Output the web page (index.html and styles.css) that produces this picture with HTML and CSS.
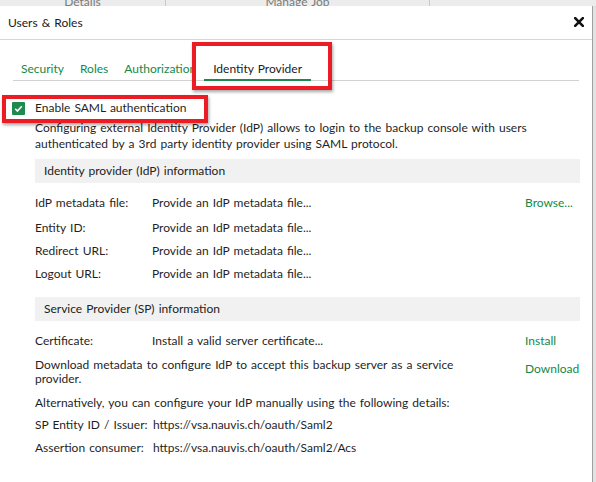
FILE: index.html
```html
<!DOCTYPE html>
<html lang="en">
<head>
<meta charset="utf-8">
<title>Users &amp; Roles</title>
<link rel="stylesheet" href="styles.css">
</head>
<body>
<div class="screen">
  <div class="strip">
    <div class="col c1"><span>Details</span></div>
    <div class="col c2"><span>Manage Job</span></div>
    <div class="col c3"></div>
  </div>
  <div class="main">
    <div class="dialog">
      <header class="dhead">
        <span class="title">Users &amp; Roles</span>
        <svg class="close" width="10" height="10" viewBox="0 0 10 10"><path d="M1.2 1.2 L8.8 8.8 M8.8 1.2 L1.2 8.8" stroke="#111" stroke-width="2.6" stroke-linecap="square" fill="none"/></svg>
      </header>
      <nav class="tabs">
        <span class="tab">Security</span>
        <span class="tab">Roles</span>
        <span class="tab">Authorization</span>
        <span class="tab active">Identity Provider</span>
      </nav>
      <div class="content">
        <div class="check">
          <span class="box"><svg width="13" height="13" viewBox="0 0 13 13"><path d="M3.2 6.8 L5.4 9 L9.8 4.2" stroke="#fff" stroke-width="1.6" fill="none"/></svg></span>
          <span>Enable SAML authentication</span>
        </div>
        <p class="desc">Configuring external Identity Provider (IdP) allows to login to the backup console with users authenticated by a 3rd party identity provider using SAML protocol.</p>

        <div class="sec">Identity provider (IdP) information</div>
        <div class="rows">
          <div class="row tall"><span>IdP metadata file:</span><span>Provide an IdP metadata file...</span><span class="link">Browse...</span></div>
          <div class="row"><span>Entity ID:</span><span>Provide an IdP metadata file...</span><span></span></div>
          <div class="row"><span>Redirect URL:</span><span>Provide an IdP metadata file...</span><span></span></div>
          <div class="row"><span>Logout URL:</span><span>Provide an IdP metadata file...</span><span></span></div>
        </div>

        <div class="sec sec2">Service Provider (SP) information</div>
        <div class="row cert"><span>Certificate:</span><span>Install a valid server certificate...</span><span class="link">Install</span></div>
        <div class="dl">
          <span class="dltext">Download metadata to configure IdP to accept this backup server as a service provider.</span>
          <span class="link dllink">Download</span>
        </div>
        <div class="alt">Alternatively, you can configure your IdP manually using the following details:</div>
        <div class="sprow"><span>SP Entity ID / Issuer:</span><span>https://vsa.nauvis.ch/oauth/Saml2</span></div>
        <div class="sprow"><span>Assertion consumer:</span><span>https://vsa.nauvis.ch/oauth/Saml2/Acs</span></div>
      </div>
    </div>
    <div class="side"></div>
  </div>
  <div class="mark mark1"></div>
  <div class="mark mark2"></div>
</div>
</body>
</html>
```
FILE: styles.css
```css
* { box-sizing: border-box; }
body {
  margin: 0;
  background: #e4e4e4;
  font-family: Lato, "Segoe UI", sans-serif;
  font-size: 12px;
  word-spacing: 1px;
  color: #1f1f1f;
}
.screen { width: 596px; height: 482px; position: relative; overflow: hidden; }

.strip { display: flex; height: 6px; overflow: hidden; background: #ececec; color: #7a7a7a; }
.col { border-right: 1px solid #c9c9c9; text-align: center; line-height: 12px; }
.col span { display: block; margin-top: -4px; }
.c1 { width: 166px; }
.c2 { width: 264px; }
.c3 { flex: 1; border-right: 0; }

.main { display: flex; height: 476px; }
.dialog { width: 593px; background: #fff; border-right: 1px solid #a0a0a0; }
.side { flex: 1; background: #e2e2e2; }

.dhead {
  height: 34px;
  border-bottom: 1px solid #d6d6d6;
  display: flex;
  align-items: center;
  justify-content: space-between;
  padding: 0 8px 0 8px;
}
.title { font-size: 12px; color: #1a1a1a; }
.close { display: block; margin-top: -1px; }

.tabs {
  display: flex;
  margin: 17px 0 0 13px;
  width: 566px;
  height: 24px;
  border-bottom: 1px solid #d2d2d2;
}
.tab { padding: 0 8px; height: 23px; line-height: 23px; color: #138a47; }
.tab.active {
  color: #222;
  height: 24px;
  padding: 0 9px;
  box-shadow: inset 0 -2px 0 #1b8a4c;
}

.content { padding: 0 12px 0 35px; }

.check {
  display: flex;
  align-items: center;
  gap: 10px;
  margin: 19px 0 0 -23px;
  height: 16px;
  line-height: 16px;
}
.box { width: 13px; height: 13px; background: #1f8a4e; border-radius: 1px; display: block; }
.box svg { display: block; }

.desc { margin: 4px 0 0; line-height: 16px; max-width: 545px; }

.sec {
  margin-top: 7px;
  height: 24px;
  line-height: 24px;
  padding-left: 9px;
  background: #f1f1f1;
  color: #222;
}
.sec2 { margin-top: 12px; }

.rows { margin-top: 6px; }
.row {
  display: grid;
  grid-template-columns: 117px 1fr 55px;
  align-items: center;
  height: 23px;
}
.row.tall { height: 27px; }
.row.cert { margin-top: 8px; }
.link { color: #128a46; }

.dl {
  display: flex;
  justify-content: space-between;
  margin-top: 6px;
  line-height: 14px;
}
.dltext { max-width: 440px; }
.dllink { width: 55px; padding-top: 4px; }

.alt { margin-top: 6px; height: 21px; line-height: 21px; }
.sprow {
  display: grid;
  grid-template-columns: 118px 1fr;
  align-items: center;
  height: 23px;
}

.mark {
  position: absolute;
  border: 4px solid #ec1c24;
  box-shadow: 1px 2px 3px rgba(0, 0, 0, 0.35);
}
.mark1 { left: 192px; top: 42px; width: 140px; height: 48px; }
.mark2 { left: 2px; top: 95px; width: 206px; height: 28px; }
```
